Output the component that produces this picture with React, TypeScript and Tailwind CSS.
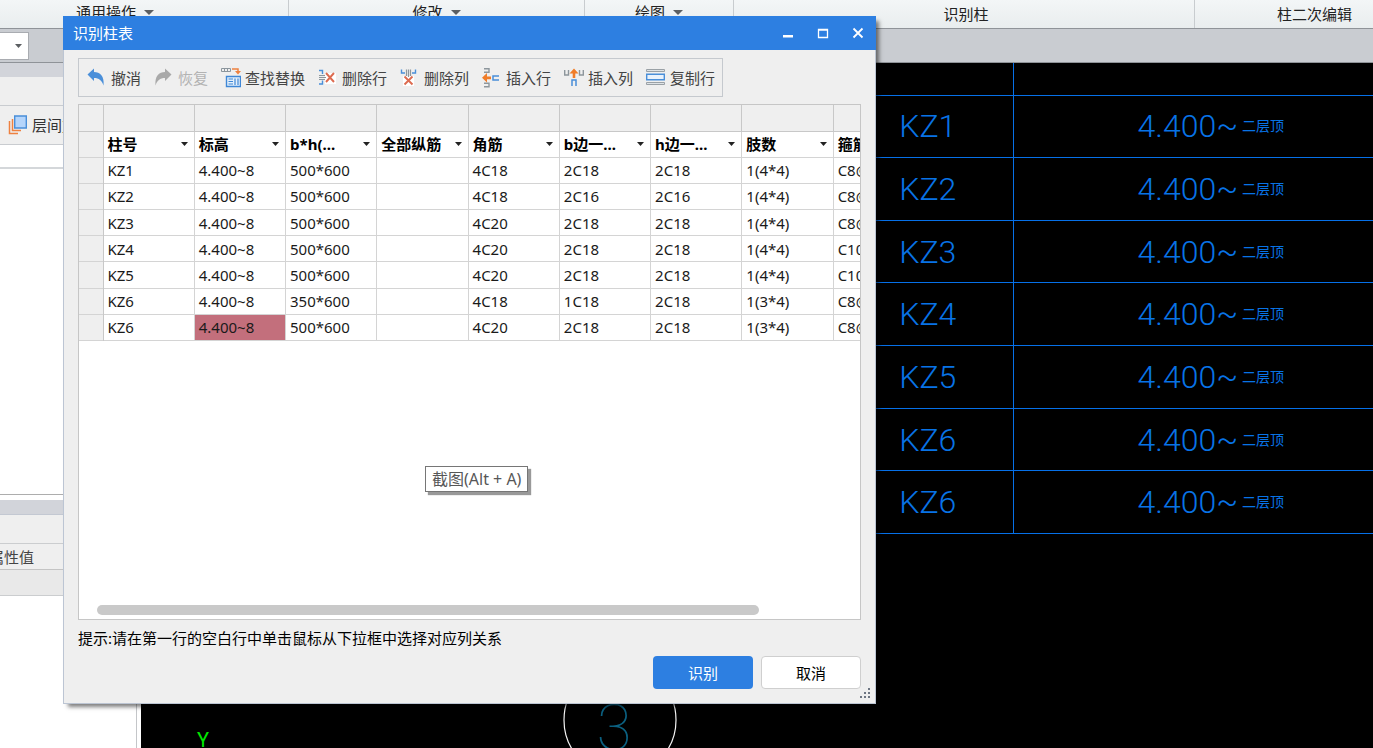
import React from "react";

const columns = [
  "柱号",
  "标高",
  "b*h(...",
  "全部纵筋",
  "角筋",
  "b边一...",
  "h边一...",
  "肢数",
  "箍筋",
];

const rows = [
  ["KZ1", "4.400~8", "500*600", "", "4C18", "2C18", "2C18", "1(4*4)", "C8@"],
  ["KZ2", "4.400~8", "500*600", "", "4C18", "2C16", "2C16", "1(4*4)", "C8@"],
  ["KZ3", "4.400~8", "500*600", "", "4C20", "2C18", "2C18", "1(4*4)", "C8@"],
  ["KZ4", "4.400~8", "500*600", "", "4C20", "2C18", "2C18", "1(4*4)", "C10@"],
  ["KZ5", "4.400~8", "500*600", "", "4C20", "2C18", "2C18", "1(4*4)", "C10@"],
  ["KZ6", "4.400~8", "350*600", "", "4C18", "1C18", "2C18", "1(3*4)", "C8@"],
  ["KZ6", "4.400~8", "500*600", "", "4C20", "2C18", "2C18", "1(3*4)", "C8@"],
];

const drawingRows = ["KZ1", "KZ2", "KZ3", "KZ4", "KZ5", "KZ6", "KZ6"];

const UndoIcon = () => (
  <svg width="20" height="20" viewBox="0 0 20 20" className="shrink-0" fill="#4a8fd9">
    <path d="M0.5 6.5 L7 0.5 V4 C13 4 17.5 8 16.5 17.5 C15 12.5 12 10 7 10 V13 Z" />
  </svg>
);

const RedoIcon = () => (
  <svg width="20" height="20" viewBox="0 0 20 20" className="shrink-0" fill="#a9a9a9">
    <path d="M17.5 6.5 L11 0.5 V4 C5 4 0.5 8 1.5 17.5 C3 12.5 6 10 11 10 V13 Z" />
  </svg>
);

const ReplaceIcon = () => (
  <svg width="20" height="22" viewBox="0 0 20 22" className="shrink-0" fill="none">
    <path d="M0.5 1.5 H9.5 V4.5 H0.5 Z M3.5 1.5 V4.5 M6.5 1.5 V4.5" stroke="#8b959c" />
    <path d="M11 2 H17 V5" stroke="#ee8140" strokeWidth="1.5" />
    <path d="M14 4 H20 L17 7.5 Z" fill="#ee8140" />
    <path d="M5.5 9.5 H19.5 V19.5 H5.5 Z" stroke="#3f87d6" strokeWidth="1.4" fill="#e3effb" />
    <path d="M7.5 12 H12 M7.5 14.5 H12 M7.5 17 H12 M14 11.5 V18 M17 11.5 V18" stroke="#3f87d6" strokeWidth="1.2" />
  </svg>
);

const DeleteRowIcon = () => (
  <svg width="20" height="20" viewBox="0 0 20 20" className="shrink-0" fill="none">
    <path d="M7 5 H18 V16 H7 Z" fill="#fff" />
    <path d="M1 2.5 H4.5 V6 M1 16 H4.5 V12.5" stroke="#4a8fd9" strokeWidth="1.4" />
    <path d="M1 7.5 H7 M1 9.5 H8 M1 11.5 H7" stroke="#8d969c" strokeWidth="1.2" />
    <path d="M8 5 L16 14 M16 5 L8 14" stroke="#dd6b50" strokeWidth="1.9" />
  </svg>
);

const DeleteColumnIcon = () => (
  <svg width="20" height="20" viewBox="0 0 20 20" className="shrink-0" fill="none">
    <path d="M3 8 H14 V18 H3 Z" fill="#fff" />
    <path d="M1.5 1.5 V5 H5 M15.5 1.5 V5 H12" stroke="#4a8fd9" strokeWidth="1.4" />
    <path d="M6.5 1.5 V8 M8.5 1.5 V9 M10.5 1.5 V8" stroke="#8d969c" strokeWidth="1.2" />
    <path d="M4.5 8.5 L12.5 16.5 M12.5 8.5 L4.5 16.5" stroke="#dd6b50" strokeWidth="1.9" />
  </svg>
);

const InsertRowIcon = () => (
  <svg width="20" height="20" viewBox="0 0 20 20" className="shrink-0" fill="none">
    <path d="M2 0.8 H7 V4.3 H2 M2 18.8 H7 V15.3 H2" stroke="#8d969c" strokeWidth="1.4" />
    <path d="M0 9.8 L5 5 V8.4 H9 V11.2 H5 V14.5 Z" fill="#f07c28" />
    <path d="M17 8 H11 V12 H17" stroke="#4a8fd9" strokeWidth="1.5" />
  </svg>
);

const InsertColumnIcon = () => (
  <svg width="20" height="20" viewBox="0 0 20 20" className="shrink-0" fill="none">
    <path d="M0.7 2 V7 H4.5 V2 M15.5 2 V7 H19.3 V2" stroke="#8d969c" strokeWidth="1.4" />
    <path d="M10 0.5 L14.5 5.5 H11.3 V10 H8.7 V5.5 H5.5 Z" fill="#f07c28" />
    <path d="M8 18 V12 H12 V18" stroke="#4a8fd9" strokeWidth="1.5" />
  </svg>
);

const CopyRowIcon = () => (
  <svg width="20" height="20" viewBox="0 0 20 20" className="shrink-0" fill="none">
    <path d="M0.5 1.5 H18.5 V3.5 H0.5 Z M0.5 14.5 H18.5 V16.5 H0.5 Z" stroke="#9aa1a6" fill="#dfe3e6" />
    <path d="M0.7 6.3 H18.3 V11.7 H0.7 Z" stroke="#4a8fd9" strokeWidth="1.4" fill="#e9f2fc" />
  </svg>
);

const tools = [
  { label: "撤消", icon: <UndoIcon /> },
  { label: "恢复", icon: <RedoIcon />, disabled: true },
  { label: "查找替换", icon: <ReplaceIcon /> },
  { label: "删除行", icon: <DeleteRowIcon /> },
  { label: "删除列", icon: <DeleteColumnIcon /> },
  { label: "插入行", icon: <InsertRowIcon /> },
  { label: "插入列", icon: <InsertColumnIcon /> },
  { label: "复制行", icon: <CopyRowIcon /> },
];

const Caret = () => (
  <svg width="10" height="5" viewBox="0 0 10 5" fill="#5c5f62">
    <path d="M0 0 H10 L5 5 Z" />
  </svg>
);

const Ribbon = () => (
  <header className="flex h-7 shrink-0 bg-linear-to-b from-[#f3f6f7] to-[#e9edee]">
    <button className="flex w-[289px] shrink-0 items-start gap-2 border-r border-[#c8cccf] pl-[76px]">
      通用操作
      <span className="pt-[10px]"><Caret /></span>
    </button>
    <button className="flex w-[296px] shrink-0 items-start justify-center gap-2 border-r border-[#c8cccf]">
      修改
      <span className="pt-[10px]"><Caret /></span>
    </button>
    <button className="flex w-[149px] shrink-0 items-start justify-center gap-2 border-r border-[#c8cccf]">
      绘图
      <span className="pt-[10px]"><Caret /></span>
    </button>
    <div className="flex w-[461px] shrink-0 items-center justify-center border-r border-[#c8cccf] pl-1">
      识别柱
    </div>
    <div className="flex flex-1 items-center whitespace-nowrap pl-[82px]">柱二次编辑</div>
  </header>
);

const SidePanel = () => (
  <aside className="flex w-[137px] shrink-0 flex-col border-r border-[#c4c6c9] bg-white">
    <div className="h-[14px] shrink-0 bg-[#d2d4da]" />
    <div className="h-[29px] shrink-0 border-b border-[#c9ccd0] bg-[#efefef]" />
    <div className="flex h-[39px] shrink-0 items-center border-b border-[#c9ccd0] bg-[#efefef] pl-2">
      <button className="flex items-center gap-1 whitespace-nowrap text-[#333]">
        <svg width="20" height="20" viewBox="0 0 20 20" fill="none">
          <path d="M1.5 6 V18.5 H10 M4.5 4 V15.5 H13" stroke="#ee8140" strokeWidth="1.5" />
          <path d="M6.7 1 H18.3 V13 H6.7 Z" stroke="#4a8fd9" strokeWidth="1.4" fill="#b5d5fb" />
        </svg>
        层间复制
      </button>
    </div>
    <div className="h-6 shrink-0 border-b-2 border-[#d4d7da]" />
    <div className="h-[326px] shrink-0 border-b border-[#adadad]" />
    <div className="mt-[5px] h-[15px] shrink-0 border-b border-[#c3c8d2] bg-[#d2d4da]" />
    <div className="h-[29px] shrink-0 border-b border-[#cbcdcf] bg-[#efefef]" />
    <div className="flex h-[26px] w-full shrink-0 items-center border-b border-[#c4c4c4] bg-[#efefef] text-[#444]">
      <div className="flex w-[34px] justify-end whitespace-nowrap">属性值</div>
    </div>
    <div className="h-[26px] shrink-0 border-b border-[#cbcdcf] bg-[#e9e9e9]" />
  </aside>
);

const Drawing = () => (
  <main className="relative ml-1 flex-1 overflow-hidden bg-black">
    <table className="h-[471px] w-full table-fixed border-collapse font-['Roboto','Noto_Sans_CJK_SC',sans-serif] text-[32px] font-light text-[#0873e6]">
      <colgroup>
        <col className="w-[702px]" />
        <col className="w-[170px]" />
        <col />
      </colgroup>
      <tbody>
        <tr className="h-8 border-b border-[#0670e8]">
          <td />
          <td className="border-r border-[#0670e8]" />
          <td />
        </tr>
        {drawingRows.map((name, index) => (
          <tr key={index} className="border-b border-[#0670e8]">
            <td />
            <td className="border-r border-[#0670e8] p-0 text-center leading-none">{name}</td>
            <td className="p-0 pl-[124px] leading-none">
              <div className="flex items-center gap-1 whitespace-nowrap">
                4.400~
                <span className="text-[14px] font-normal">二层顶</span>
              </div>
            </td>
          </tr>
        ))}
      </tbody>
    </table>
    <svg className="absolute left-0 top-[600px]" width="600" height="120" viewBox="0 0 600 120" fill="none">
      <circle cx="479" cy="57" r="56" stroke="#f2f2f2" strokeWidth="1.2" />
      <text x="473" y="87" fill="#0b6080" fontSize="64" fontWeight="100" textAnchor="middle" fontFamily="Roboto, sans-serif">
        3
      </text>
      <text x="56" y="84" fill="#00e800" fontSize="20" fontFamily="Roboto, sans-serif">
        Y
      </text>
    </svg>
  </main>
);

const RebarTable = () => (
  <div className="relative h-[516px] overflow-hidden border border-[#c6c6c6] bg-white">
    <table className="h-[236px] w-[846px] table-fixed border-collapse text-left text-[#1a1a1a]">
      <colgroup>
        <col className="w-6" />
        {columns.map((column) => (
          <col key={column} />
        ))}
      </colgroup>
      <thead>
        <tr className="h-[26px] border-b border-[#c8c8c8] bg-[#efefef]">
          <td className="border-r border-[#c8c8c8]" />
          {columns.map((column) => (
            <td key={column} className="border-r border-[#c8c8c8]" />
          ))}
        </tr>
        <tr className="h-[26px] border-b border-[#d4d4d4]">
          <td className="border-r border-[#c8c8c8] bg-[#efefef]" />
          {columns.map((column) => (
            <th key={column} className="border-r border-[#d4d4d4] p-0 pl-1 font-bold text-black">
              <button className="flex w-full items-center justify-between whitespace-nowrap pr-[6px] leading-5">
                {column}
                <svg width="7" height="4" viewBox="0 0 7 4" fill="#222">
                  <path d="M0 0 H7 L3.5 4 Z" />
                </svg>
              </button>
            </th>
          ))}
        </tr>
      </thead>
      <tbody>
        {rows.map((row, rowIndex) => (
          <tr key={rowIndex} className="border-b border-[#d4d4d4]">
            <td className="border-r border-[#c8c8c8] bg-[#efefef]" />
            {row.map((cell, index) => (
              <td
                key={index}
                className={
                  rowIndex === 6 && index === 1
                    ? "border-r border-[#d4d4d4] bg-[#c36f7c] p-0 pl-1 leading-5"
                    : "border-r border-[#d4d4d4] p-0 pl-1 leading-5"
                }
              >
                {cell}
              </td>
            ))}
          </tr>
        ))}
      </tbody>
    </table>
    <div className="absolute bottom-1 left-[18px] h-[10px] w-[662px] rounded-full bg-[#c9c9c9]" />
  </div>
);

const ColumnDialog = () => (
  <section
    role="dialog"
    aria-labelledby="dialog-title"
    className="absolute left-[63px] top-4 flex h-[688px] w-[813px] flex-col border border-t-0 border-[#bcc5d3] bg-[#efefef] shadow-[4px_4px_4px_-1px_rgba(0,0,0,0.5)]"
  >
    <div className="-mx-px flex h-[34px] shrink-0 items-center justify-between bg-[#2d7fe1] pl-[10px] pr-3 text-white">
      <h1 id="dialog-title">识别柱表</h1>
      <div className="flex gap-[23px]">
        <button aria-label="最小化">
          <svg width="12" height="12" viewBox="0 0 12 12" fill="#fff">
            <path d="M1 8 H11 V10.5 H1 Z" />
          </svg>
        </button>
        <button aria-label="最大化">
          <svg width="12" height="12" viewBox="0 0 12 12" fill="none" stroke="#fff">
            <path d="M1.5 2.5 H10.5 V10.5 H1.5 Z M1 3 H11" strokeWidth="1.3" />
          </svg>
        </button>
        <button aria-label="关闭">
          <svg width="12" height="12" viewBox="0 0 12 12" fill="none" stroke="#fff">
            <path d="M1.5 1.5 L10.5 10.5 M10.5 1.5 L1.5 10.5" strokeWidth="1.8" />
          </svg>
        </button>
      </div>
    </div>

    <div className="flex flex-1 flex-col px-[14px] pb-[14px] pt-2">
      <div className="flex h-[39px] w-[645px] items-center gap-[13px] border border-[#c5c9ce] pl-2">
        {tools.map((tool) => (
          <button
            key={tool.label}
            disabled={tool.disabled}
            className="flex shrink-0 items-center gap-1 whitespace-nowrap text-[#444] disabled:text-[#b3b3b3]"
          >
            {tool.icon}
            {tool.label}
          </button>
        ))}
      </div>

      <div className="mt-[7px]">
        <RebarTable />
      </div>

      <p className="mt-[6px] text-black">提示:请在第一行的空白行中单击鼠标从下拉框中选择对应列关系</p>

      <div className="mt-auto flex justify-end gap-2">
        <button className="h-[33px] w-[100px] rounded bg-[#2d7fe1] text-white">识别</button>
        <button className="h-[33px] w-[100px] rounded border border-[#cfcfcf] bg-white text-black">取消</button>
      </div>
    </div>

    <div className="absolute left-[361px] top-[450px] whitespace-nowrap border border-[#767676] bg-white px-[6px] text-base text-[#575757] shadow-[3px_3px_1px_rgba(0,0,0,0.4)]">
      截图(Alt + A)
    </div>

    <svg className="absolute bottom-1 right-1" width="11" height="11" viewBox="0 0 11 11" fill="#6e7683">
      <path d="M8 0h2v2h-2z M4 4h2v2h-2z M8 4h2v2h-2z M0 8h2v2h-2z M4 8h2v2h-2z M8 8h2v2h-2z" />
    </svg>
  </section>
);

const App = () => {
  return (
    <div className="relative flex h-screen flex-col overflow-hidden bg-white font-['Noto_Sans','Noto_Sans_CJK_SC',sans-serif] text-[15px] leading-6 text-[#222]">
      <Ribbon />
      <div className="flex h-[35px] shrink-0 items-center border-y border-[#8f9398] bg-[#c9ccd1]">
        <div className="relative">
          <select
            aria-label="楼层"
            className="block h-7 w-[29px] appearance-none border border-l-0 border-[#a9acb1] bg-white"
          />
          <span className="pointer-events-none absolute right-[7px] top-3">
            <svg width="7" height="4" viewBox="0 0 7 4" fill="#5c5f62">
              <path d="M0 0 H7 L3.5 4 Z" />
            </svg>
          </span>
        </div>
      </div>
      <div className="flex min-h-0 flex-1">
        <SidePanel />
        <Drawing />
      </div>
      <ColumnDialog />
    </div>
  );
};

export default App;
